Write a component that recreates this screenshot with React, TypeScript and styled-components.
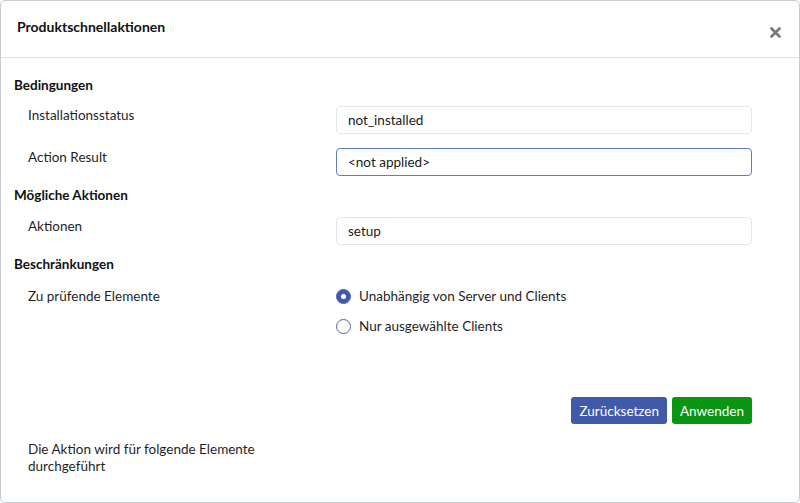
import React from "react";
import styled, { createGlobalStyle } from "styled-components";

const Global = createGlobalStyle`
  html, body { margin: 0; padding: 0; background: #ffffff; }
  body { font-family: "Lato", "Noto Sans", sans-serif; color: #1f1f1f; }
  * { box-sizing: border-box; }
`;

const Modal = styled.div`
  width: 800px;
  height: 503px;
  border: 1px solid #c9ccd0;
  border-radius: 5px;
  background: #fff;
  display: flex;
  flex-direction: column;
  overflow: hidden;
`;

const Header = styled.div`
  height: 57px;
  flex: 0 0 57px;
  display: flex;
  align-items: center;
  justify-content: space-between;
  padding: 0 17px 0 16px;
  border-bottom: 1px solid #dde1e4;
`;

const Title = styled.h1`
  margin: 0;
  font-size: 14px;
  font-weight: 700;
  color: #111;
  position: relative;
  top: -3px;
`;

const Close = styled.button`
  border: 0;
  background: transparent;
  padding: 0;
  width: 14px;
  height: 14px;
  display: flex;
  align-items: center;
  justify-content: center;
  cursor: pointer;
  position: relative;
  top: 3px;
`;

const Body = styled.div`
  flex: 1;
  display: flex;
  flex-direction: column;
  padding: 17px 47px 0 13px;
`;

const SectionTitle = styled.h2<{ $gap: number }>`
  margin: 0 0 ${(p) => p.$gap}px 0;
  font-size: 13.5px;
  line-height: 20px;
  font-weight: 700;
  color: #111;
`;

const Row = styled.div<{ $gap: number }>`
  display: grid;
  grid-template-columns: 322px 1fr;
  align-items: start;
  margin-bottom: ${(p) => p.$gap}px;
`;

const Label = styled.div`
  padding: 0 0 0 14px;
  font-size: 13.5px;
  line-height: 18px;
  color: #1f1f1f;
`;

const InputBox = styled.div<{ $focused?: boolean }>`
  height: 28px;
  border: 1px solid ${(p) => (p.$focused ? "#5f7dc2" : "#e4e6e8")};
  border-radius: 4px;
  display: flex;
  align-items: center;
  padding: 0 11px;
  font-size: 13.5px;
  color: #1a1a1a;
  background: #fff;
`;

const RadioList = styled.div`
  display: flex;
  flex-direction: column;
  gap: 12px;
`;

const RadioItem = styled.label`
  display: flex;
  align-items: center;
  gap: 8px;
  font-size: 13.5px;
  line-height: 18px;
  color: #1f1f1f;
`;

const RadioDot = styled.span<{ $checked?: boolean }>`
  width: 15px;
  height: 15px;
  border-radius: 50%;
  flex: 0 0 15px;
  border: 1px solid #4a62b0;
  background: ${(p) => (p.$checked ? "#4059a9" : "#fff")};
  display: flex;
  align-items: center;
  justify-content: center;
  &::after {
    content: "";
    width: 5px;
    height: 5px;
    border-radius: 50%;
    background: #fff;
    display: ${(p) => (p.$checked ? "block" : "none")};
  }
`;

const Actions = styled.div`
  display: flex;
  justify-content: flex-end;
  gap: 5px;
  margin-top: 62px;
`;

const Button = styled.button<{ $variant: "blue" | "green" }>`
  height: 27px;
  border: 0;
  border-radius: 3px;
  padding: 0 8px;
  font-family: inherit;
  font-size: 13.5px;
  color: #fff;
  background: ${(p) => (p.$variant === "blue" ? "#4059a9" : "#0a9612")};
  cursor: pointer;
`;

const FooterRow = styled.div`
  display: grid;
  grid-template-columns: 322px 1fr;
  margin-top: 17px;
`;

const FooterText = styled.div`
  padding-left: 14px;
  padding-right: 50px;
  font-size: 13.5px;
  line-height: 17px;
  color: #1f1f1f;
`;

export default function App() {
  return (
    <>
      <Global />
      <Modal>
        <Header>
          <Title>Produktschnellaktionen</Title>
          <Close aria-label="close">
            <svg width="11" height="11" viewBox="0 0 11 11">
              <path d="M1.5 1.5 L9.5 9.5 M9.5 1.5 L1.5 9.5" stroke="#777" strokeWidth="2.6" strokeLinecap="round" />
            </svg>
          </Close>
        </Header>
        <Body>
          <SectionTitle $gap={11}>Bedingungen</SectionTitle>
          <Row $gap={14}>
            <Label>Installationsstatus</Label>
            <InputBox>not_installed</InputBox>
          </Row>
          <Row $gap={9}>
            <Label>Action Result</Label>
            <InputBox $focused>&lt;not applied&gt;</InputBox>
          </Row>
          <SectionTitle $gap={12}>Mögliche Aktionen</SectionTitle>
          <Row $gap={9}>
            <Label>Aktionen</Label>
            <InputBox>setup</InputBox>
          </Row>
          <SectionTitle $gap={13}>Beschränkungen</SectionTitle>
          <Row $gap={0}>
            <Label>Zu prüfende Elemente</Label>
            <RadioList>
              <RadioItem>
                <RadioDot $checked />
                Unabhängig von Server und Clients
              </RadioItem>
              <RadioItem>
                <RadioDot />
                Nur ausgewählte Clients
              </RadioItem>
            </RadioList>
          </Row>
          <Actions>
            <Button $variant="blue">Zurücksetzen</Button>
            <Button $variant="green">Anwenden</Button>
          </Actions>
          <FooterRow>
            <FooterText>Die Aktion wird für folgende Elemente durchgeführt</FooterText>
          </FooterRow>
        </Body>
      </Modal>
    </>
  );
}
